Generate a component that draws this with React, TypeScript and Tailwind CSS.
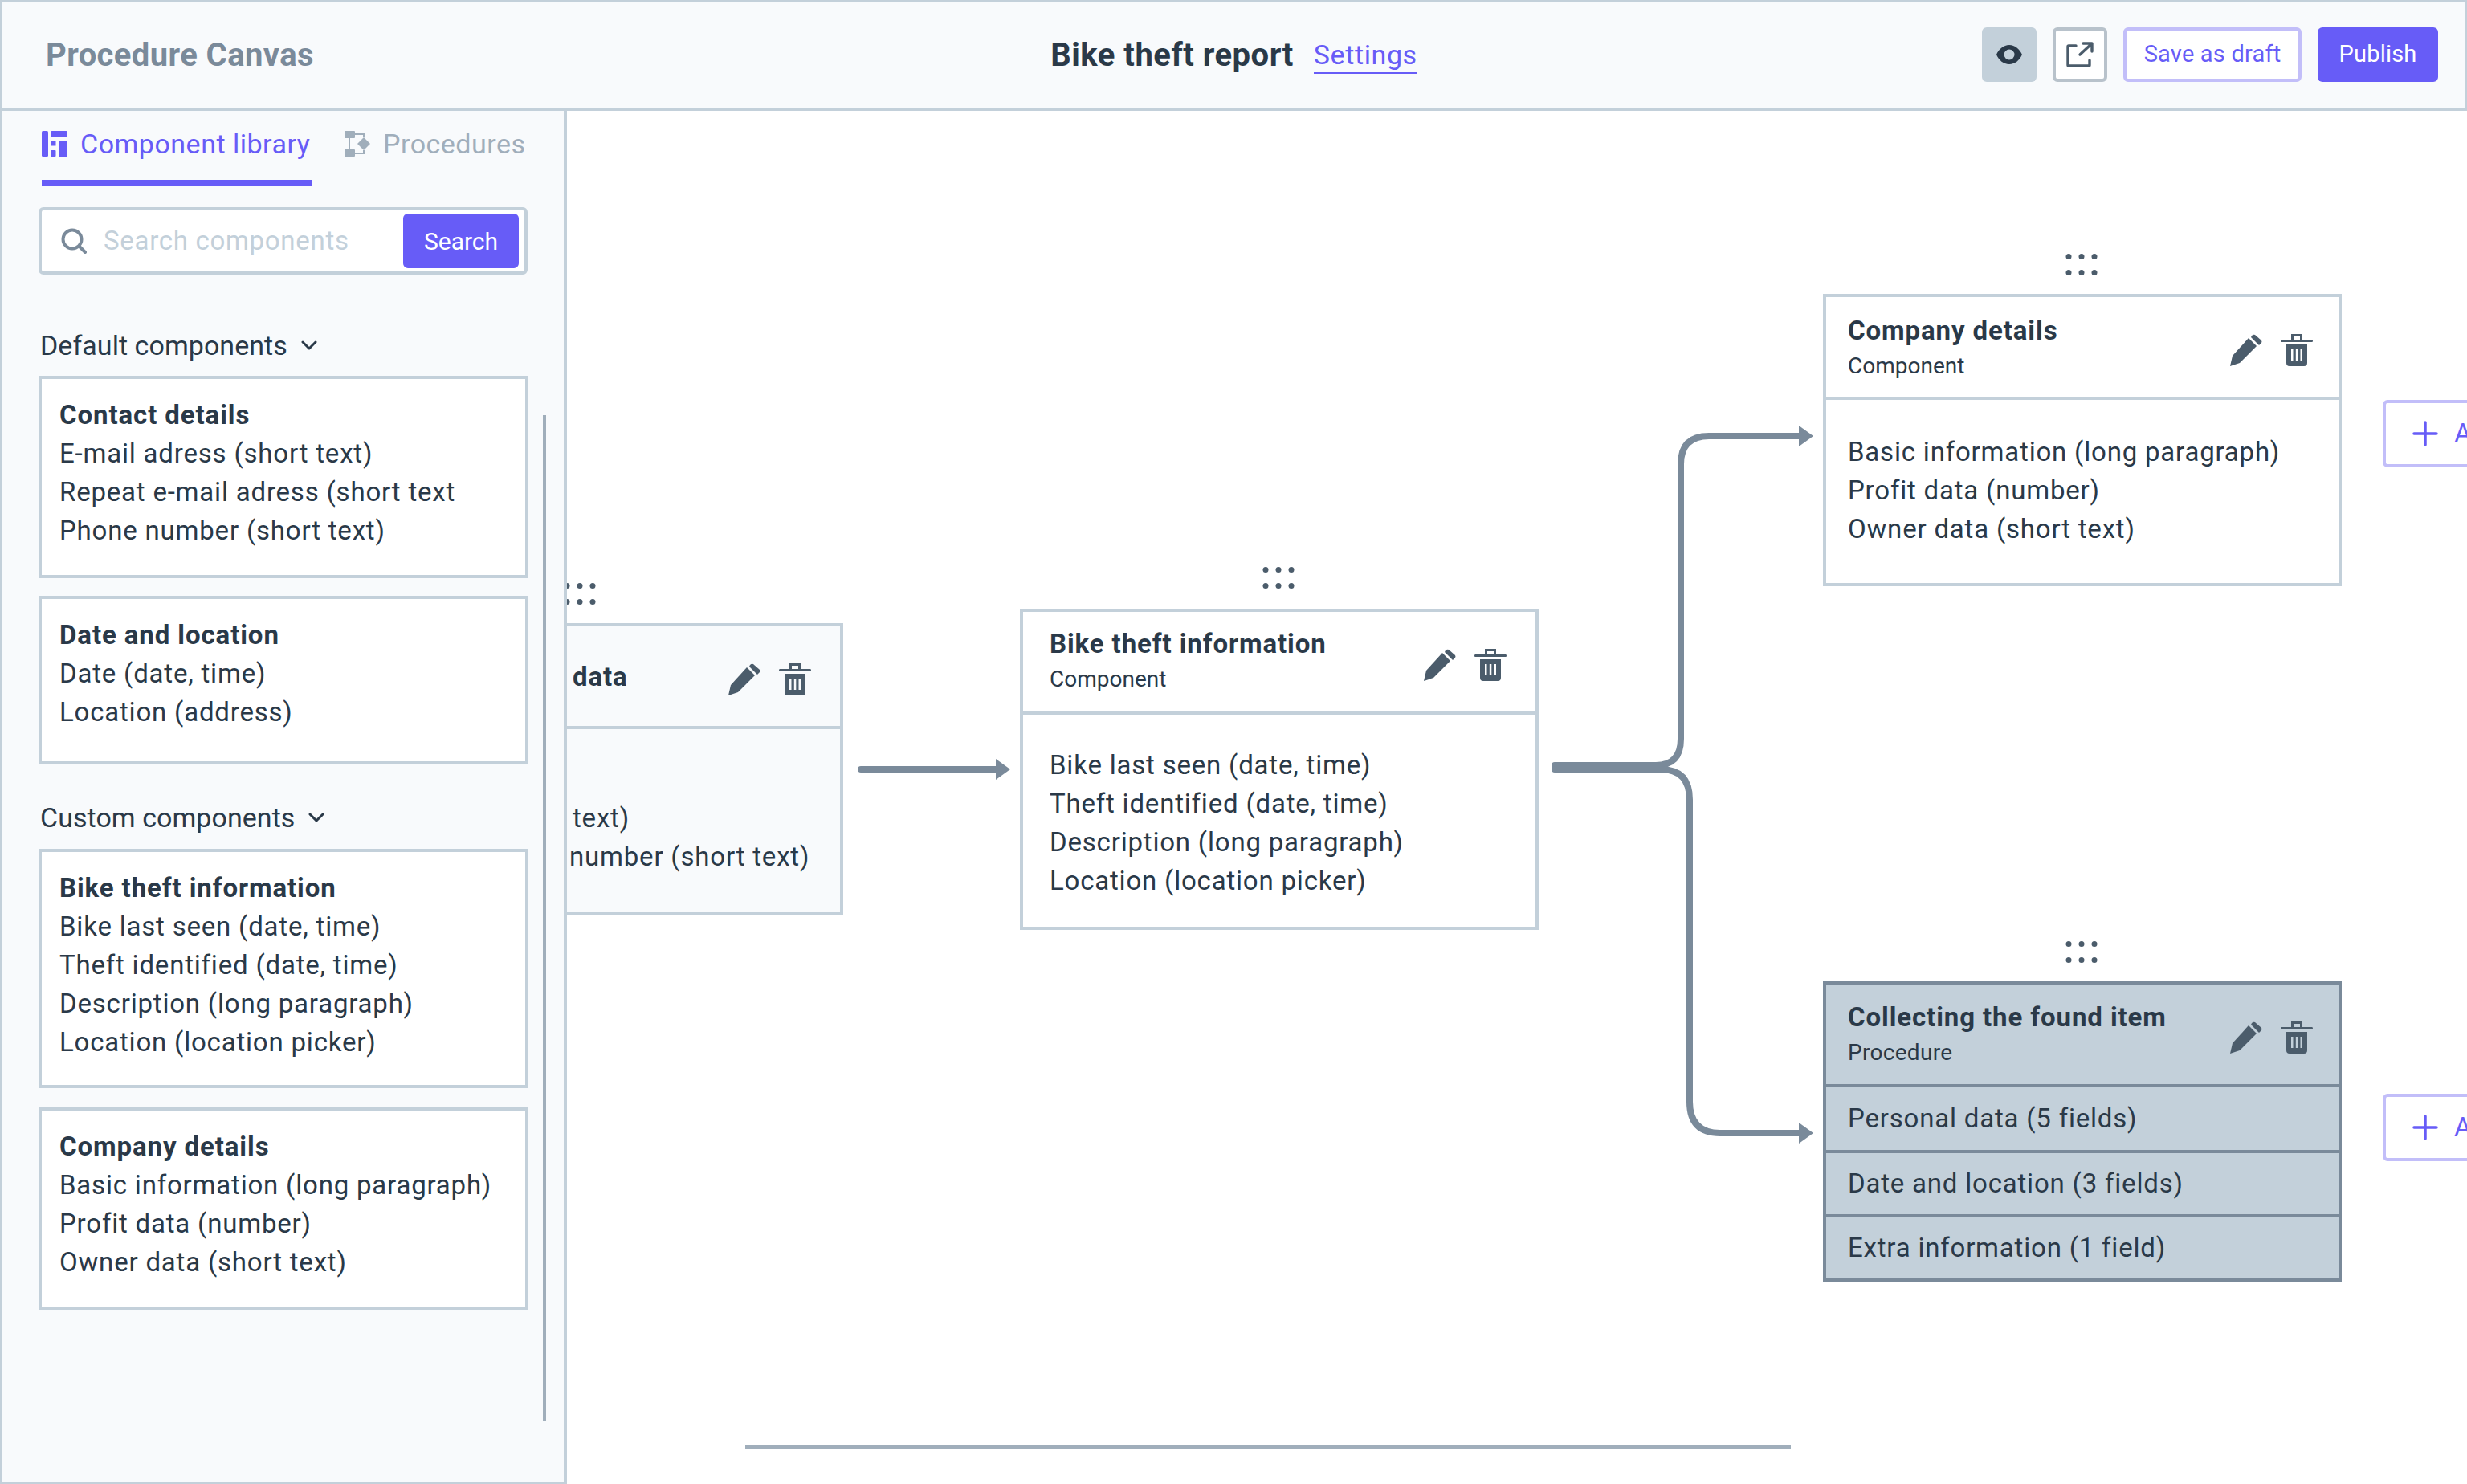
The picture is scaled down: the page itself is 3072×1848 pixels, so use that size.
import React from "react";

function Pencil() {
  return (
    <svg viewBox="0 0 40 40" className="w-[40px] h-[40px] block" fill="#4b5c6b">
      <path d="M0 40 L3 27 L23 5 L33 15 L12 36 Z" />
      <path d="M27 2 Q29 0 31 1 L39 8 Q40 10 39 11 L36 14 L26 4 Z" />
    </svg>
  );
}
function Trash() {
  return (
    <svg viewBox="0 0 40 40" className="w-[40px] h-[40px] block" fill="#4b5c6b">
      <path fillRule="evenodd" d="M13 0 H27 V7 H39 Q40 7 40 8.5 Q40 10 39 10 H1 Q0 10 0 8.5 Q0 7 1 7 H13 Z M16 3 V7 H24 V3 Z" />
      <path fillRule="evenodd" d="M7 13 H33 V36 Q33 40 29 40 H11 Q7 40 7 36 Z M13 19 V33 H15.5 V19 Z M18.8 19 V33 H21.3 V19 Z M24.5 19 V33 H27 V19 Z" />
    </svg>
  );
}
function Dots() {
  return (
    <svg viewBox="0 0 40 27" className="w-[40px] h-[27px] block" fill="#4b5c6b">
      {[3.5, 23.5].map((y) => [4, 20, 36].map((x) => <circle key={`${x}-${y}`} cx={x} cy={y} r="3.5" />))}
    </svg>
  );
}
function Plus() {
  return (
    <svg viewBox="0 0 32 32" className="w-[32px] h-[32px] block shrink-0" stroke="#675cf7" strokeWidth="3.5" strokeLinecap="round">
      <path d="M16 2 V30 M2 16 H30" />
    </svg>
  );
}
function Actions() {
  return (
    <div className="flex items-center gap-[23px] mt-[8px]">
      <Pencil />
      <Trash />
    </div>
  );
}
function LibCard({ title, items, cls }: { title: string; items: string[]; cls: string }) {
  return (
    <div className={`border-4 border-[#c3d0da] bg-white pl-[22px] pt-[21px] text-[33px] leading-[48px] text-[#2a3948] tracking-[0.8px] ${cls}`}>
      <div className="font-bold tracking-[0.9px]">{title}</div>
      {items.map((t) => (
        <div key={t}>{t}</div>
      ))}
    </div>
  );
}
function Chevron() {
  return (
    <svg viewBox="0 0 20 12" className="w-[20px] h-[12px] block" fill="none" stroke="#2a3948" strokeWidth="3" strokeLinecap="round" strokeLinejoin="round">
      <path d="M2 2 L10 10 L18 2" />
    </svg>
  );
}
function SectionLabel({ text, cls }: { text: string; cls: string }) {
  return (
    <div className={`flex items-center gap-[17px] ml-[2px] text-[34px] leading-[48px] text-[#2a3948] tracking-[0.05px] ${cls}`}>
      {text}
      <Chevron />
    </div>
  );
}
function NodeCard({
  pos,
  head,
  textShift,
  body,
  title,
  sub,
  items,
}: {
  pos: string;
  head: string;
  textShift: string;
  body: string;
  title: string;
  sub: string;
  items: string[];
}) {
  return (
    <div className={`absolute w-[646px] border-4 border-[#c3d0da] bg-white text-[#2a3948] ${pos}`}>
      <div className={`h-[124px] flex items-center justify-between ${head}`}>
        <div className={textShift}>
          <div className="text-[33px] leading-[44px] font-bold tracking-[0.9px]">{title}</div>
          <div className="text-[28px] leading-[44px] tracking-[0px]">{sub}</div>
        </div>
        <Actions />
      </div>
      <div className={`border-t-4 border-[#c3d0da] text-[33px] leading-[48px] tracking-[0.8px] ${body}`}>
        {items.map((t) => (
          <div key={t}>{t}</div>
        ))}
      </div>
    </div>
  );
}

export default function App() {
  return (
    <div className="w-[3072px] h-[1848px] flex flex-col overflow-hidden bg-white font-['Roboto',sans-serif]">
      <header className="h-[138px] shrink-0 border-2 border-b-4 border-[#c3d0da] bg-[#f8fafc] grid grid-cols-[1fr_auto_1fr] items-center pl-[55px] pr-[34px]">
        <div className="mt-[2px] text-[40px] font-bold text-[#7a8a9a] tracking-[0.4px]">Procedure Canvas</div>
        <div className="flex items-center gap-[25px] mr-[20px] mt-[2px]">
          <span className="text-[40px] font-bold text-[#2a3948] tracking-[0.5px]">Bike theft report</span>
          <span className="text-[34px] leading-[44px] text-[#675cf7] border-b-2 border-[#675cf7] tracking-[0.6px]">Settings</span>
        </div>
        <div className="flex items-center justify-end gap-[20px]">
          <button className="w-[68px] h-[68px] rounded-[6px] bg-[#c3d0da] flex items-center justify-center">
            <svg viewBox="0 0 32 24" className="w-[32px] h-[24px] block" fill="#2a3948">
              <path fillRule="evenodd" d="M0 12 C3 5 9 0 16 0 C23 0 29 5 32 12 C29 19 23 24 16 24 C9 24 3 19 0 12 Z M16 5.5 A6.5 6.5 0 1 0 16 18.5 A6.5 6.5 0 1 0 16 5.5 Z" />
            </svg>
          </button>
          <button className="w-[68px] h-[68px] rounded-[6px] border-4 border-[#b8c2cb] bg-white flex items-center justify-center">
            <svg viewBox="0 0 34 32" className="w-[34px] h-[32px] block" fill="none" stroke="#4b5c6b" strokeWidth="3.4" strokeLinecap="round" strokeLinejoin="round">
              <path d="M12 5 H3 Q2 5 2 6 V29 Q2 30 3 30 H28 Q29 30 29 29 V23" />
              <path d="M17 16 L31 3 M21 2 H32 V12" />
            </svg>
          </button>
          <button className="w-[222px] h-[68px] rounded-[6px] border-4 border-[#c2bef9] bg-white text-[#675cf7] text-[29px] tracking-[0.2px]">Save as draft</button>
          <button className="w-[150px] h-[68px] rounded-[6px] bg-[#675cf7] text-white text-[29px] tracking-[0.2px]">Publish</button>
        </div>
      </header>
      <div className="flex flex-1 min-h-0">
        <aside className="relative w-[706px] shrink-0 border-l-2 border-r-4 border-b-2 border-[#c3d0da] bg-[#f8fafc] pl-[46px] pr-[44px]">
          <div className="flex gap-[41px] h-[94px] ml-[4px]">
            <div className="w-[336px] h-[94px] border-b-8 border-[#675cf7] flex items-center gap-[16px] pb-[4px] text-[#675cf7] text-[34px] tracking-[0.5px] whitespace-nowrap">
              <svg viewBox="0 0 32 32" className="w-[32px] h-[32px] block shrink-0" fill="#675cf7">
                <rect x="0" y="0" width="8" height="32" rx="1.5" />
                <rect x="11" y="0" width="21" height="8" rx="1.5" />
                <rect x="11" y="12" width="6.5" height="6.5" />
                <rect x="11" y="24" width="6.5" height="8" rx="1" />
                <rect x="21" y="12" width="11" height="20" rx="1" />
              </svg>
              Component library
            </div>
            <div className="flex items-center gap-[16px] pb-[12px] text-[#a0aebb] text-[34px] tracking-[0.5px]">
              <svg viewBox="0 0 32 32" className="w-[32px] h-[32px] block shrink-0" fill="#a0aebb">
                <rect x="0" y="0" width="13" height="9" rx="1" />
                <rect x="0" y="23" width="13" height="9" rx="1" />
                <path d="M24 8 L32 16 L24 24 L16 16 Z" />
                <path d="M6 9 V23" stroke="#a0aebb" strokeWidth="2" />
                <path d="M13 4 H24 V8 M13 28 H24 V24" fill="none" stroke="#a0aebb" strokeWidth="2" />
              </svg>
              Procedures
            </div>
          </div>
          <div className="mt-[26px] h-[84px] w-[609px] border-4 border-[#c3d0da] rounded-[6px] bg-white flex items-center pl-[24px] pr-[7px]">
            <svg viewBox="0 0 32 32" className="w-[32px] h-[32px] block shrink-0" fill="none" stroke="#7a8a9a" strokeWidth="4" strokeLinecap="round">
              <circle cx="14" cy="14" r="11.5" />
              <path d="M23 23 L30 30" />
            </svg>
            <span className="ml-[21px] text-[33px] text-[#c3d0da] tracking-[0.7px]">Search components</span>
            <button className="ml-auto w-[144px] h-[68px] rounded-[6px] bg-[#675cf7] text-white text-[30px]">Search</button>
          </div>
          <SectionLabel text="Default components" cls="mt-[64px]" />
          <div className="w-[610px] flex flex-col mt-[14px]">
            <LibCard cls="h-[252px]" title="Contact details" items={["E-mail adress (short text)", "Repeat e-mail adress (short text", "Phone number (short text)"]} />
            <LibCard cls="h-[210px] mt-[22px]" title="Date and location" items={["Date (date, time)", "Location (address)"]} />
          </div>
          <SectionLabel text="Custom components" cls="mt-[42px]" />
          <div className="w-[610px] flex flex-col mt-[15px] gap-[24px]">
            <LibCard cls="h-[298px]" title="Bike theft information" items={["Bike last seen (date, time)", "Theft identified (date, time)", "Description (long paragraph)", "Location (location picker)"]} />
            <LibCard cls="h-[252px]" title="Company details" items={["Basic information (long paragraph)", "Profit data (number)", "Owner data (short text)"]} />
          </div>
          <div className="absolute left-[674px] top-[379px] w-[4px] h-[1253px] bg-[#a0aebb]" />
        </aside>
        <main className="relative flex-1 overflow-hidden bg-white">
          <svg viewBox="706 138 2366 1710" className="absolute left-0 top-0 w-[2366px] h-[1710px]" fill="none" stroke="#7a8a9a" strokeWidth="8" strokeLinecap="round">
            <path d="M1072 958 H1244" />
            <path d="M1240 945 L1258 958 L1240 971 Z" fill="#7a8a9a" stroke="none" />
            <path d="M1936 953 H2062 Q2093 953 2093 920 V578 Q2093 543 2128 543 H2244" />
            <path d="M2240 530 L2258 543 L2240 556 Z" fill="#7a8a9a" stroke="none" />
            <path d="M1936 958 H2068 Q2104 958 2104 996 V1372 Q2104 1411 2142 1411 H2244" />
            <path d="M2240 1398 L2258 1411 L2240 1424 Z" fill="#7a8a9a" stroke="none" />
          </svg>

          <div className="absolute left-[-4px] top-[588px]"><Dots /></div>
          <div className="absolute left-0 top-[638px] w-[344px] h-[364px] border-4 border-l-0 border-[#c3d0da] bg-[#f8fafc] text-[#2a3948]">
            <div className="h-[124px] flex items-center justify-between pl-[7px] pr-[36px]">
              <div className="mt-[2px] text-[33px] font-bold tracking-[0.9px]">data</div>
              <Actions />
            </div>
            <div className="border-t-4 border-[#c3d0da] pt-[87px] text-[33px] leading-[48px] tracking-[0.8px]">
              <div className="pl-[7px]">text)</div>
              <div className="pl-[3px]">number (short text)</div>
            </div>
          </div>

          <div className="absolute left-[866px] top-[568px]"><Dots /></div>
          <NodeCard pos="left-[564px] top-[620px] h-[400px]" head="pl-[33px] pr-[36px]" textShift="" body="pl-[33px] pt-[39px]" title="Bike theft information" sub="Component" items={["Bike last seen (date, time)", "Theft identified (date, time)", "Description (long paragraph)", "Location (location picker)"]} />

          <div className="absolute left-[1866px] top-[178px]"><Dots /></div>
          <NodeCard pos="left-[1564px] top-[228px] h-[364px]" head="pl-[27px] pr-[32px]" textShift="mt-[4px]" body="pl-[27px] pt-[41px]" title="Company details" sub="Component" items={["Basic information (long paragraph)", "Profit data (number)", "Owner data (short text)"]} />

          <div className="absolute left-[1866px] top-[1034px]"><Dots /></div>
          <div className="absolute left-[1564px] top-[1084px] w-[646px] border-4 border-[#7a8a9a] bg-[#c3d0da] text-[#2a3948]">
            <div className="h-[124px] flex items-center justify-between pl-[27px] pr-[32px]">
              <div className="mt-[2px]">
                <div className="text-[33px] leading-[44px] font-bold tracking-[0.9px]">Collecting the found item</div>
                <div className="text-[28px] leading-[44px] tracking-[0.3px]">Procedure</div>
              </div>
              <Actions />
            </div>
            <div className="h-[82px] border-t-4 border-[#7a8a9a] pl-[27px] flex items-center text-[33px] tracking-[0.8px]">Personal data (5 fields)</div>
            <div className="h-[80px] border-t-4 border-[#7a8a9a] pl-[27px] flex items-center text-[33px] tracking-[0.8px]">Date and location (3 fields)</div>
            <div className="h-[80px] border-t-4 border-[#7a8a9a] pl-[27px] flex items-center text-[33px] tracking-[0.8px]">Extra information (1 field)</div>
          </div>

          <div className="absolute left-[2261px] top-[360px] w-[300px] h-[84px] rounded-[6px] border-4 border-[#c2bef9] bg-white flex items-center pl-[33px] gap-[20px] text-[#675cf7] text-[33px]">
            <Plus />
            <span>Add step</span>
          </div>
          <div className="absolute left-[2261px] top-[1224px] w-[300px] h-[84px] rounded-[6px] border-4 border-[#c2bef9] bg-white flex items-center pl-[33px] gap-[20px] text-[#675cf7] text-[33px]">
            <Plus />
            <span>Add step</span>
          </div>

          <div className="absolute left-[222px] top-[1662px] w-[1302px] h-[4px] bg-[#a0aebb]" />
        </main>
      </div>
    </div>
  );
}
